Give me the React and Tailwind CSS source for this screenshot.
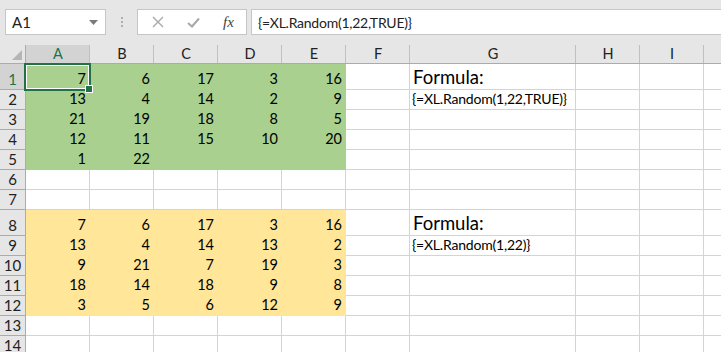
import React from "react";

const FONT = { fontFamily: "Lato, 'Noto Sans', sans-serif" };

const COLS = ["A", "B", "C", "D", "E", "F", "G", "H", "I", "J"];
const WIDTHS = ["w-[64px]", "w-[64px]", "w-[64px]", "w-[64px]", "w-[64px]", "w-[64px]", "w-[166px]", "w-[64px]", "w-[64px]", "w-[40px]"];

const green = [
  [7, 6, 17, 3, 16],
  [13, 4, 14, 2, 9],
  [21, 19, 18, 8, 5],
  [12, 11, 15, 10, 20],
  [1, 22, "", "", ""],
];
const yellow = [
  [7, 6, 17, 3, 16],
  [13, 4, 14, 13, 2],
  [9, 21, 7, 19, 3],
  [18, 14, 18, 9, 8],
  [3, 5, 6, 12, 9],
];

function buildRows() {
  const rows = [];
  for (let r = 1; r <= 14; r++) {
    const tall = r === 1 || r === 8;
    let fill = null;
    let vals = ["", "", "", "", ""];
    if (r >= 1 && r <= 5) {
      fill = "green";
      vals = green[r - 1];
    } else if (r >= 8 && r <= 12) {
      fill = "yellow";
      vals = yellow[r - 8];
    }
    let g = null;
    if (r === 1 || r === 8) g = { text: "Formula:", kind: "big" };
    if (r === 2) g = { text: "{=XL.Random(1,22,TRUE)}", kind: "formula" };
    if (r === 9) g = { text: "{=XL.Random(1,22)}", kind: "formula" };
    rows.push({ r, tall, fill, vals, g });
  }
  return rows;
}

function Cell({ width, fill, children, align = "right", kind }) {
  const bg =
    fill === "green"
      ? "bg-[#a9d08e] border-[#a9d08e]"
      : fill === "yellow"
      ? "bg-[#ffe699] border-[#ffe699]"
      : "bg-white border-[#d4d4d4]";
  const textCls =
    kind === "big"
      ? "text-[18.5px] leading-[24px] text-black pl-[1px]"
      : kind === "formula"
      ? "text-[14px] leading-[20px] tracking-[-0.2px] text-black"
      : "text-[14.5px] leading-[20px] text-black";
  return (
    <div
      className={`${width} shrink-0 h-full border-r border-b ${bg} flex items-end ${
        align === "right" ? "justify-end pr-[3px]" : "justify-start pl-[2px]"
      } overflow-visible whitespace-nowrap`}
    >
      <span className={textCls}>{children}</span>
    </div>
  );
}

function Toolbar() {
  return (
    <div className="h-[45px] bg-[#e6e6e6] flex items-start pt-[9px]">
      <div className="ml-[5px] w-[101px] h-[26px] border border-[#c6c6c6] bg-white flex items-center justify-between pl-[6px] pr-[7px]">
        <span className="text-[15px] text-[#222]">A1</span>
        <svg width="9" height="5" viewBox="0 0 9 5">
          <path d="M0 0 H9 L4.5 5 Z" fill="#7a7a7a" />
        </svg>
      </div>
      <div className="w-[31px] h-[26px] flex flex-col items-center justify-center gap-[2px] pl-[1px]">
        <div className="w-[2px] h-[2px] bg-[#b0b0b0]" />
        <div className="w-[2px] h-[2px] bg-[#b0b0b0]" />
        <div className="w-[2px] h-[2px] bg-[#b0b0b0]" />
      </div>
      <div className="w-[110px] h-[26px] border border-[#c6c6c6] bg-white flex items-center">
        <div className="w-[37px] flex justify-center pl-[3px]">
          <svg width="12" height="12" viewBox="0 0 12 12">
            <path d="M1 1 L11 11 M11 1 L1 11" stroke="#a8a8a8" strokeWidth="1.4" />
          </svg>
        </div>
        <div className="w-[36px] flex justify-center">
          <svg width="13" height="11" viewBox="0 0 13 11">
            <path d="M1 6 L5 9.5 L12 1.5" stroke="#a8a8a8" strokeWidth="2" fill="none" />
          </svg>
        </div>
        <div className="w-[35px] flex justify-center">
          <span
            className="text-[15px] italic text-[#444] leading-none"
            style={{ fontFamily: "'Liberation Serif', 'DejaVu Serif', serif" }}
          >
            fx
          </span>
        </div>
      </div>
      <div className="ml-[4px] flex-1 mr-[-4px] h-[26px] border border-[#c6c6c6] bg-white flex items-center pl-[6px]">
        <span className="text-[14px] tracking-[-0.25px] text-[#222] whitespace-nowrap">{"{=XL.Random(1,22,TRUE)}"}</span>
      </div>
    </div>
  );
}

function ColumnHeader() {
  return (
    <div className="flex h-[19px]">
      <div className="w-[26px] shrink-0 h-full bg-[#e6e6e6] border-r border-b border-[#ababab] relative">
        <svg className="absolute right-[3px] bottom-[3px]" width="10" height="10" viewBox="0 0 10 10">
          <path d="M10 0 V10 H0 Z" fill="#b5b5b5" />
        </svg>
      </div>
      {COLS.map((c, i) => (
        <div
          key={c}
          className={`${WIDTHS[i]} shrink-0 h-full border-b border-[#ababab] flex items-center justify-center text-[14.5px] relative ${
            i === 0 ? "bg-[#d3d3d3] text-[#217346]" : "bg-[#e6e6e6] text-[#222]"
          }`}
        >
          <div className="absolute right-0 top-0 bottom-[0px] w-px bg-[#c0c0c0]" />
          {c !== "J" ? c : ""}
        </div>
      ))}
    </div>
  );
}

export default function App() {
  const rows = buildRows();
  return (
    <div className="w-[721px] h-[352px] overflow-hidden bg-white relative" style={FONT}>
      <Toolbar />
      <ColumnHeader />
      {rows.map((row) => (
        <div key={row.r} className={`flex ${row.tall ? "h-[26px]" : "h-[20px]"}`}>
          <div
            className={`w-[26px] shrink-0 h-full border-r border-b border-[#ababab] flex items-end justify-center text-[15px] leading-[20px] ${
              row.r === 1 ? "bg-[#d3d3d3] text-[#217346]" : "bg-[#e6e6e6] text-[#222]"
            }`}
          >
            {row.r}
          </div>
          {row.vals.map((v, i) => (
            <Cell key={i} width={WIDTHS[i]} fill={row.fill}>
              {v}
            </Cell>
          ))}
          <Cell width={WIDTHS[5]} />
          <Cell width={WIDTHS[6]} align="left" kind={row.g && row.g.kind}>
            {row.g ? row.g.text : ""}
          </Cell>
          <Cell width={WIDTHS[7]} />
          <Cell width={WIDTHS[8]} />
          <Cell width={WIDTHS[9]} />
        </div>
      ))}
      {/* selection */}
      <div className="absolute left-[24px] top-[63px] w-[67px] h-[28px] border-2 border-[#217346] pointer-events-none">
        <div className="w-full h-full border border-white" />
      </div>
      <div className="absolute left-[85px] top-[85px] w-[8px] h-[8px] bg-[#217346] border border-white" />
    </div>
  );
}
